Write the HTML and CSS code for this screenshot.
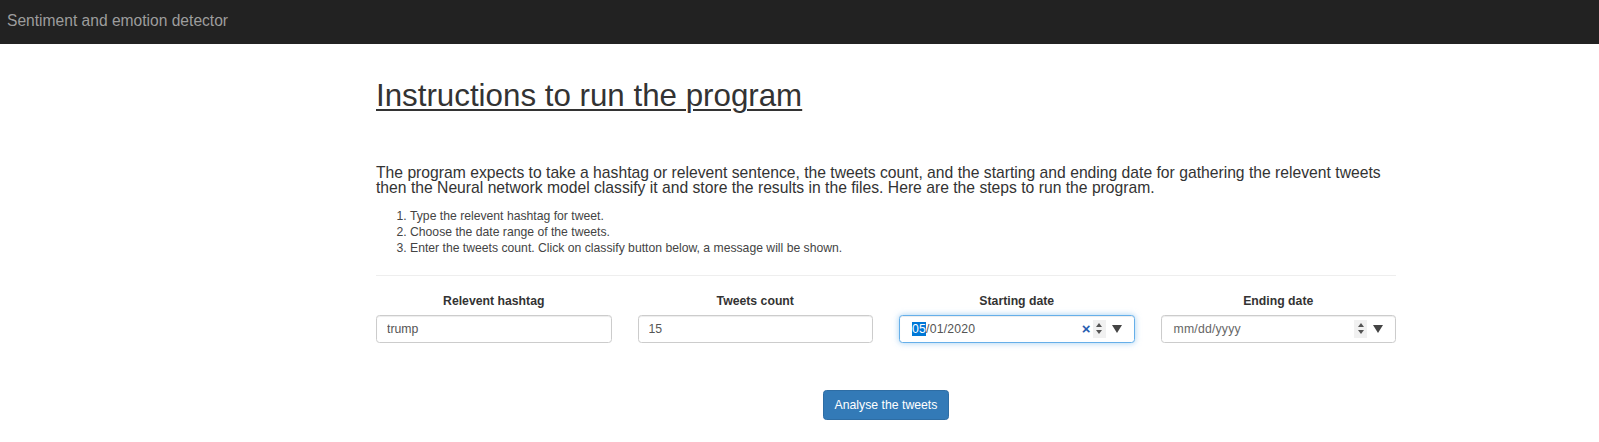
FILE: index.html
```html
<!DOCTYPE html>
<html lang="en">
<head>
<meta charset="utf-8">
<title>Sentiment and emotion detector</title>
<link rel="stylesheet" href="styles.css">
</head>
<body>
<nav class="navbar"><span class="brand">Sentiment and emotion detector</span></nav>
<main class="content">
  <h1 class="title">Instructions to run the program</h1>
  <p class="intro">The program expects to take a hashtag or relevent sentence, the tweets count, and the starting and ending date for gathering the relevent tweets then the Neural network model classify it and store the results in the files. Here are the steps to run the program.</p>
  <ol class="steps">
    <li>Type the relevent hashtag for tweet.</li>
    <li>Choose the date range of the tweets.</li>
    <li>Enter the tweets count. Click on classify button below, a message will be shown.</li>
  </ol>
  <hr class="divider">
  <div class="fields">
    <div class="field">
      <label class="field-label">Relevent hashtag</label>
      <input class="control" type="text" value="trump">
    </div>
    <div class="field">
      <label class="field-label">Tweets count</label>
      <input class="control" type="text" value="15">
    </div>
    <div class="field">
      <label class="field-label">Starting date</label>
      <div class="control date focused">
        <span class="date-text"><span class="sel">05</span>/01/2020</span>
        <span class="clear">×</span>
        <span class="spin"><span class="up"></span><span class="down"></span></span>
        <span class="drop"></span>
      </div>
    </div>
    <div class="field">
      <label class="field-label">Ending date</label>
      <div class="control date">
        <span class="date-text placeholder">mm/dd/yyyy</span>
        <span class="spin"><span class="up"></span><span class="down"></span></span>
        <span class="drop"></span>
      </div>
    </div>
  </div>
  <div class="actions"><button class="btn" type="button">Analyse the tweets</button></div>
</main>
</body>
</html>
```
FILE: styles.css
```css
* { box-sizing: border-box; }
html, body { margin: 0; padding: 0; background: #fff; }
body {
  font-family: "Liberation Sans", Arial, Helvetica, sans-serif;
  color: #333;
  font-size: 12.25px;
}
.navbar {
  height: 44px;
  background: #222;
  display: flex;
  align-items: center;
  padding-left: 7px;
}
.brand {
  color: #9d9d9d;
  font-size: 15.6px;
  line-height: 20px;
  padding-bottom: 3px;
}
.content {
  margin-left: 376px;
  width: 1020px;
  display: flex;
  flex-direction: column;
}
.title {
  margin: 35px 0 0 0;
  font-size: 31.3px;
  font-weight: 400;
  line-height: 34.65px;
  color: #333;
  text-decoration: underline;
  text-decoration-thickness: 2px;
  text-underline-offset: 3px;
  align-self: flex-start;
}
.intro {
  margin: 51px 0 0 0;
  font-size: 15.7px;
  line-height: 15.6px;
  color: #333;
}
.steps {
  margin: 12px 0 0 0;
  padding-left: 34px;
  font-size: 12.2px;
  line-height: 16px;
  color: #444;
}
.divider {
  margin: 19px 0 0 0;
  border: 0;
  border-top: 1px solid #eee;
  height: 0;
}
.fields {
  margin-top: 17px;
  display: grid;
  grid-template-columns: repeat(4, 1fr);
  column-gap: 26px;
}
.field {
  display: flex;
  flex-direction: column;
}
.field-label {
  text-align: center;
  font-weight: 700;
  font-size: 12.25px;
  line-height: 17.5px;
  margin-bottom: 4.5px;
  color: #333;
}
.control {
  height: 28px;
  width: 100%;
  border: 1px solid #ccc;
  border-radius: 3.5px;
  box-shadow: inset 0 1px 1px rgba(0,0,0,.075);
  padding: 0 10px;
  font-family: "Liberation Sans", Arial, Helvetica, sans-serif;
  font-size: 12.25px;
  color: #555;
  background: #fff;
  outline: none;
}
.date {
  display: flex;
  align-items: center;
  padding: 0 12px 0 12px;
}
.date.focused {
  border-color: #66afe9;
  box-shadow: inset 0 1px 1px rgba(0,0,0,.075), 0 0 6px rgba(102,175,233,.6);
}
.date-text {
  flex: 1;
  color: #555;
  letter-spacing: 0.2px;
}
.placeholder { color: #666; }
.sel {
  background: #0078d7;
  color: #fff;
}
.clear {
  color: #2a5db0;
  font-weight: 700;
  font-size: 15px;
  line-height: 14px;
  margin-right: 2px;
}
.spin {
  width: 13px;
  height: 18px;
  background: #f1f1f1;
  display: flex;
  flex-direction: column;
  align-items: center;
  justify-content: center;
  gap: 3px;
}
.up {
  width: 0; height: 0;
  border-left: 3px solid transparent;
  border-right: 3px solid transparent;
  border-bottom: 4px solid #555;
}
.down {
  width: 0; height: 0;
  border-left: 3px solid transparent;
  border-right: 3px solid transparent;
  border-top: 4px solid #555;
}
.drop {
  width: 0; height: 0;
  margin-left: 6px;
  border-left: 5px solid transparent;
  border-right: 5px solid transparent;
  border-top: 8px solid #444;
}
.actions {
  display: flex;
  justify-content: center;
  margin-top: 47px;
}
.btn {
  height: 30px;
  padding: 0 10.5px;
  background: #337ab7;
  border: 1px solid #2e6da4;
  border-radius: 3.5px;
  color: #fff;
  font-family: "Liberation Sans", Arial, Helvetica, sans-serif;
  font-size: 12.25px;
  line-height: 28px;
  cursor: pointer;
}
```
